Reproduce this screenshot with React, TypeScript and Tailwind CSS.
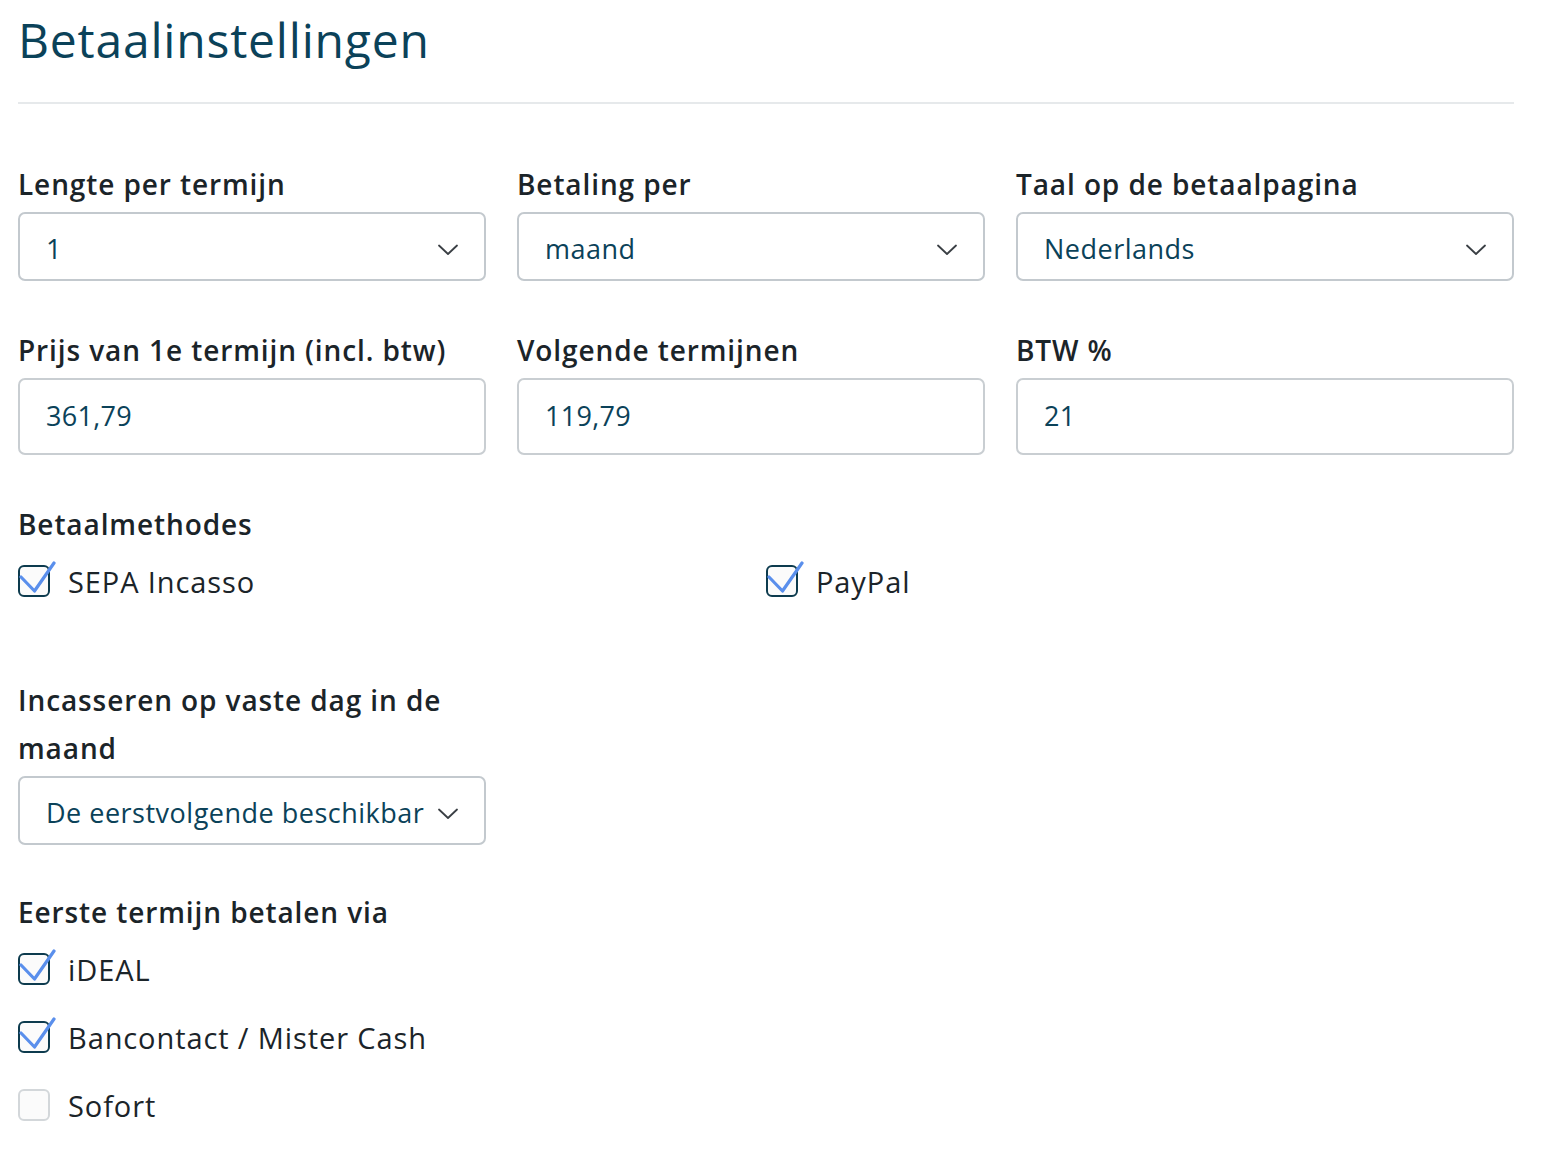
import React from 'react';

const font = { fontFamily: '"Open Sans", Lato, sans-serif' };

function Chevron() {
  return (
    <svg width="20" height="12" viewBox="0 0 20 12" fill="none" className="shrink-0">
      <path d="M1 1.5 L10 10 L19 1.5" stroke="#3a3f44" strokeWidth="1.8" strokeLinecap="round" strokeLinejoin="round" />
    </svg>
  );
}

function SelectBox({ value }: { value: string }) {
  return (
    <div className="flex h-[69px] items-center justify-between gap-[14px] rounded-[7px] border-2 border-[#c3c9ce] bg-white pl-[26px] pr-[26px] pt-[6px]">
      <span className="min-w-0 overflow-hidden whitespace-nowrap text-[27px] tracking-[0.5px] text-[#0b4259]">{value}</span>
      <Chevron />
    </div>
  );
}

function InputBox({ value }: { value: string }) {
  return (
    <div className="flex h-[77px] items-center rounded-[7px] border-2 border-[#c9ced2] bg-white pl-[26px]">
      <span className="text-[27px] tracking-[0.3px] text-[#0b4259]">{value}</span>
    </div>
  );
}

function Label({ children }: { children: React.ReactNode }) {
  return <div className="text-[28px] font-semibold leading-[48px] tracking-[0.9px] text-[#1b2429]">{children}</div>;
}

function Check({ label, checked }: { label: string; checked: boolean }) {
  return (
    <div className="flex h-[48px] items-center gap-[12px]">
      <svg width="38" height="38" viewBox="0 0 38 38" fill="none" className="shrink-0 -mt-[4px]">
        <rect
          x="1"
          y="5"
          width="30"
          height="30"
          rx="5"
          fill="#fbfbfb"
          stroke={checked ? '#0d3b4e' : '#d3d7da'}
          strokeWidth="2"
        />
        {checked && (
          <polyline
            points="3,16 16.5,30 36,2"
            stroke="#5a8fec"
            strokeWidth="3.2"
            strokeLinecap="round"
            strokeLinejoin="round"
            fill="none"
          />
        )}
      </svg>
      <span className="text-[29px] tracking-[0.9px] text-[#1b2429]">{label}</span>
    </div>
  );
}

export default function App() {
  return (
    <div className="min-h-screen bg-white pl-[18px] pr-[40px]" style={font}>
      <h1 className="pt-[10px] text-[48px] leading-[60px] tracking-[0.8px] text-[#0b4259]">Betaalinstellingen</h1>
      <div className="mt-[32px] h-[2px] bg-[#e6e9eb]" />

      <div className="mt-[56px] grid grid-cols-[468px_468px_1fr] gap-x-[31px] gap-y-[45px]">
        <div>
          <Label>Lengte per termijn</Label>
          <div className="mt-[4px]">
            <SelectBox value="1" />
          </div>
        </div>
        <div>
          <Label>Betaling per</Label>
          <div className="mt-[4px]">
            <SelectBox value="maand" />
          </div>
        </div>
        <div>
          <Label>Taal op de betaalpagina</Label>
          <div className="mt-[4px]">
            <SelectBox value="Nederlands" />
          </div>
        </div>
        <div>
          <Label>Prijs van 1e termijn (incl. btw)</Label>
          <div className="mt-[4px]">
            <InputBox value="361,79" />
          </div>
        </div>
        <div>
          <Label>Volgende termijnen</Label>
          <div className="mt-[4px]">
            <InputBox value="119,79" />
          </div>
        </div>
        <div>
          <Label>BTW %</Label>
          <div className="mt-[4px]">
            <InputBox value="21" />
          </div>
        </div>
      </div>

      <div className="mt-[45px]">
        <Label>Betaalmethodes</Label>
        <div className="mt-[10px] grid grid-cols-2">
          <Check label="SEPA Incasso" checked />
          <Check label="PayPal" checked />
        </div>
      </div>

      <div className="mt-[70px] w-[468px]">
        <Label>Incasseren op vaste dag in de maand</Label>
        <div className="mt-[4px]">
          <SelectBox value="De eerstvolgende beschikbare dag" />
        </div>
      </div>

      <div className="mt-[43px]">
        <Label>Eerste termijn betalen via</Label>
        <div className="mt-[10px] flex flex-col gap-[20px]">
          <Check label="iDEAL" checked />
          <Check label="Bancontact / Mister Cash" checked />
          <Check label="Sofort" checked={false} />
        </div>
      </div>
    </div>
  );
}
